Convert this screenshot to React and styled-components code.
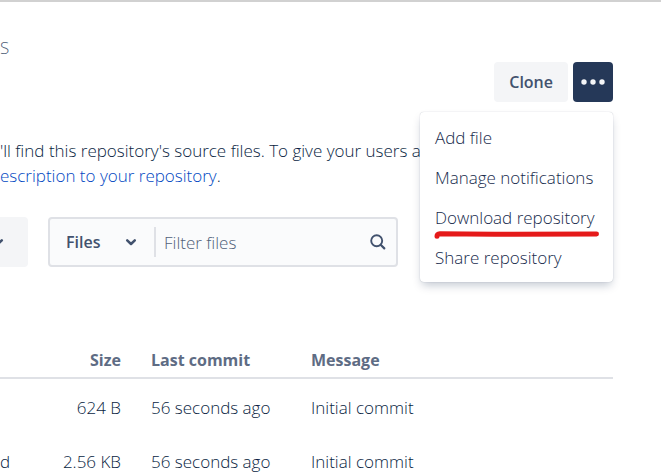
import React, { useState } from 'react';
import styled, { createGlobalStyle } from 'styled-components';

const files = [
  { name: '', size: '624 B', date: '56 seconds ago', message: 'Initial commit' },
  { name: 'd', size: '2.56 KB', date: '56 seconds ago', message: 'Initial commit' },
];

const actions = [
  { label: 'Add file' },
  { label: 'Manage notifications' },
  { label: 'Download repository', marked: true },
  { label: 'Share repository' },
];

function Chevron() {
  return (
    <Icon viewBox="0 0 20 20" aria-hidden="true">
      <path d="M6.2 8.3 10 12l3.8-3.7" strokeWidth="2.5" />
    </Icon>
  );
}

function SearchIcon() {
  return (
    <Icon viewBox="0 0 20 20" aria-hidden="true">
      <circle cx="8.7" cy="8.8" r="5.5" strokeWidth="1.9" />
      <path d="m12.9 13 3.4 3.4" strokeWidth="2.2" />
    </Icon>
  );
}

function App() {
  const [filter, setFilter] = useState('');
  const [kind, setKind] = useState('files');

  return (
    <Page>
      <GlobalStyle />
      <Crumb>S</Crumb>
      <Header>
        <CloneButton type="button">Clone</CloneButton>
        <MoreWrap>
          <MoreButton type="button" aria-label="More actions" aria-expanded="true">
            <Dots viewBox="0 0 24 6" aria-hidden="true">
              <circle cx="3" cy="3" r="2.7" />
              <circle cx="12" cy="3" r="2.7" />
              <circle cx="21" cy="3" r="2.7" />
            </Dots>
          </MoreButton>
          <Menu>
            {actions.map((action) => (
              <MenuItem type="button" key={action.label}>
                {action.label}
                {action.marked && (
                  <Marker viewBox="0 0 166 9" aria-hidden="true">
                    <path d="M3 6.2Q3 4 6 3.8Q40 4.4 80 4.2T162.5 4" />
                  </Marker>
                )}
              </MenuItem>
            ))}
          </Menu>
        </MoreWrap>
      </Header>

      <Description>
        'll find this repository's source files. To give your users a
        <br />
        <Link href="#description">escription to your repository</Link>.
      </Description>

      <Toolbar>
        <BranchButton type="button" aria-label="Branch">
          <Chevron />
        </BranchButton>
        <FilterBox>
          <KindWrap>
            <KindSelect aria-label="Type" value={kind} onChange={(e) => setKind(e.target.value)}>
              <option value="files">Files</option>
            </KindSelect>
            <Chevron />
          </KindWrap>
          <FilterInput
            aria-label="Filter files"
            placeholder="Filter files"
            value={filter}
            onChange={(e) => setFilter(e.target.value)}
          />
          <SearchIcon />
        </FilterBox>
      </Toolbar>

      <Table>
        <thead>
          <tr>
            <HeadCell $width="40px" />
            <HeadCell $width="96px" $right>Size</HeadCell>
            <HeadCell $width="160px">Last commit</HeadCell>
            <HeadCell>Message</HeadCell>
          </tr>
        </thead>
        <tbody>
          {files.map((file) => (
            <tr key={file.size}>
              <NameCell>{file.name}</NameCell>
              <Cell $right>{file.size}</Cell>
              <Cell>{file.date}</Cell>
              <Cell>{file.message}</Cell>
            </tr>
          ))}
        </tbody>
      </Table>
    </Page>
  );
}

const GlobalStyle = createGlobalStyle`
* {
box-sizing: border-box;
}
body {
margin: 0;
overflow-x: hidden;
background-color: #fff;
color: #091e42;
font-family: "Open Sans", "Noto Sans", sans-serif;
font-size: 17px;
font-weight: 300;
line-height: 25px;
}
button, input, select {
font: inherit;
}
`;

const Page = styled.div`
padding-right: 48px;
border-top: 2px solid #d1d1d1;
overflow: hidden;
`;

const Crumb = styled.div`
margin-top: 33px;
color: #505f79;
`;

const Header = styled.div`
display: flex;
justify-content: flex-end;
gap: 5px;
margin-top: 2px;
`;

const CloneButton = styled.button`
height: 40px;
padding: 0 15px;
border: none;
border-radius: 4px;
background-color: #f4f5f7;
color: #42526e;
font-size: 16px;
font-weight: 600;
`;

const MoreWrap = styled.div`
position: relative;
`;

const MoreButton = styled.button`
display: flex;
align-items: center;
justify-content: center;
width: 40px;
height: 40px;
padding: 0;
border: none;
border-radius: 4px;
background-color: #253858;
`;

const Dots = styled.svg`
width: 24px;
height: 6px;
fill: #f4f5f7;
`;

const Menu = styled.div`
position: absolute;
top: 50px;
right: 0;
z-index: 1;
display: flex;
flex-direction: column;
min-width: 193px;
padding: 5px 0;
border-radius: 4px;
background-color: #fff;
box-shadow: 0 5px 10px -2px rgba(9,30,66,0.25), 0 0 1px rgba(9,30,66,0.31);
`;

const MenuItem = styled.button`
position: relative;
height: 40px;
padding: 0 15px;
border: none;
background: none;
color: #172b4d;
text-align: left;
white-space: nowrap;
`;

const Marker = styled.svg`
position: absolute;
left: 14px;
bottom: -2px;
width: 166px;
height: 9px;
fill: none;
stroke: #e51a1a;
stroke-width: 5;
stroke-linecap: round;
`;

const Description = styled.p`
margin: 36px 0 0;
white-space: nowrap;
`;

const Link = styled.a`
color: #0047c2;
text-decoration: none;
`;

const Icon = styled.svg`
flex: none;
width: 20px;
height: 20px;
fill: none;
stroke: #42526e;
stroke-linecap: round;
stroke-linejoin: round;
pointer-events: none;
`;

const Toolbar = styled.div`
display: flex;
gap: 20px;
margin-top: 29px;
margin-left: -32px;
`;

const BranchButton = styled.button`
display: flex;
align-items: center;
justify-content: flex-end;
width: 60px;
padding: 0 20px;
border: none;
border-radius: 4px;
background-color: #f4f5f7;
`;

const FilterBox = styled.div`
display: flex;
align-items: center;
width: 350px;
height: 50px;
padding-right: 8px;
border: 2px solid #dfe1e6;
border-radius: 4px;
background-color: #fafbfc;
`;

const KindWrap = styled.div`
display: flex;
align-items: center;
height: 30px;
width: 106px;
padding-left: 16px;
padding-right: 13px;
border-right: 2px solid #dfe1e6;
`;

const KindSelect = styled.select`
appearance: none;
flex: 1;
min-width: 0;
padding: 0;
border: none;
background: none;
color: #42526e;
font-size: 16px;
font-weight: 600;
`;

const FilterInput = styled.input`
flex: 1;
min-width: 0;
padding: 0 8px;
border: none;
outline: none;
background: none;
color: #172b4d;

&::placeholder {
color: #505f79;
opacity: 1;
}
`;

const Table = styled.table`
width: 100%;
margin-top: 77px;
border-spacing: 0;
table-layout: fixed;
`;

const HeadCell = styled.th`
width: ${(props) => props.$width || 'auto'};
padding: 4px 15px;
border-bottom: 2px solid #dfe1e6;
color: #5e6c84;
font-size: 16px;
font-weight: 700;
text-align: ${(props) => (props.$right ? 'right' : 'left')};
white-space: nowrap;
`;

const Cell = styled.td`
height: 54px;
padding: 2px 15px 0;
text-align: ${(props) => (props.$right ? 'right' : 'left')};
white-space: nowrap;
`;

const NameCell = styled(Cell)`
padding-left: 0;
`;

export default App;
